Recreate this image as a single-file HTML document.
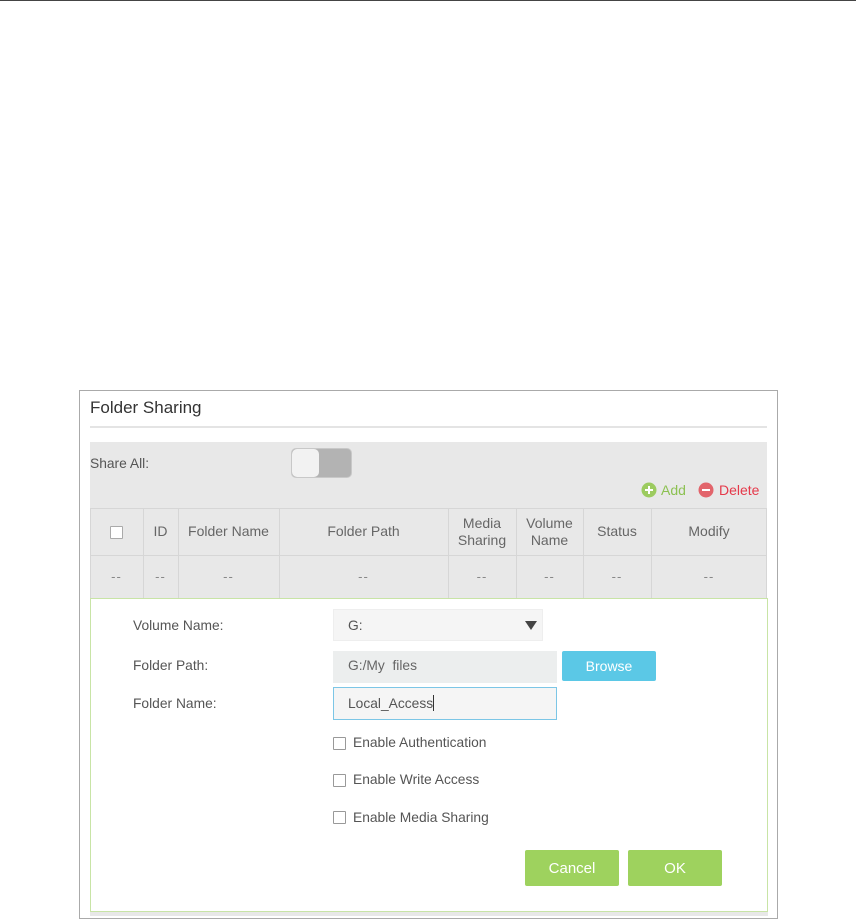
<!DOCTYPE html>
<html><head><meta charset="utf-8"><style>
*{margin:0;padding:0;box-sizing:border-box}
body{width:856px;height:920px;background:#fff;position:relative;overflow:hidden;font-family:"Liberation Sans",sans-serif;color:#555}
.a{position:absolute}
.t{font-size:13.8px;color:#555}
.cb{position:absolute;width:13px;height:13px;border:1px solid #999;background:#fff;border-radius:1px}
.col{position:absolute;top:508px;height:90px;border-left:1px solid #d6d6d6}
.hd{position:absolute;top:508px;height:47px;display:flex;align-items:center;justify-content:center;text-align:center;font-size:14px;color:#666;line-height:17px}
.dd{position:absolute;top:555px;height:43px;display:flex;align-items:center;justify-content:center;font-size:13px;color:#888;letter-spacing:1px}
.btn{position:absolute;background:#9ed25e;color:#fff;font-size:15px;display:flex;align-items:center;justify-content:center;border-radius:2px}
</style></head><body>
<div class="a" style="left:0;top:0;width:856px;height:1px;background:#444"></div>
<div class="a" style="left:79px;top:390px;width:699px;height:529px;border:1px solid #aaa"></div>
<div class="a" style="left:90px;top:398px;font-size:17px;color:#333">Folder Sharing</div>
<div class="a" style="left:90px;top:426px;width:677px;height:2px;background:#e4e4e4"></div>
<div class="a" style="left:90px;top:442px;width:677px;height:156px;background:#e8e8e8"></div>
<div class="a t" style="left:90px;top:456px">Share All:</div>
<div class="a" style="left:291px;top:448px;width:61px;height:30px;background:#b3b3b3;border-radius:5px;border:1px solid #c8c8c8"></div>
<div class="a" style="left:292px;top:449px;width:27px;height:28px;background:#f2f2f2;border-radius:5px"></div>
<svg class="a" style="left:641px;top:482px" width="16" height="16"><circle cx="8" cy="8" r="7.5" fill="#9ccb5f"/><path d="M4 8h8M8 4v8" stroke="#fff" stroke-width="2"/></svg>
<div class="a" style="left:661px;top:482px;font-size:14px;color:#8cc152">Add</div>
<svg class="a" style="left:698px;top:482px" width="16" height="16"><circle cx="8" cy="8" r="7.5" fill="#e2646b"/><path d="M4 8h8" stroke="#fff" stroke-width="2"/></svg>
<div class="a" style="left:719px;top:482px;font-size:14px;color:#e5394a">Delete</div>
<div class="a" style="left:90px;top:508px;width:677px;height:90px;border-top:1px solid #d6d6d6;border-right:1px solid #d6d6d6;border-left:1px solid #d6d6d6"></div>
<div class="a" style="left:90px;top:555px;width:677px;height:1px;background:#d6d6d6"></div>
<div class="col" style="left:143px"></div><div class="col" style="left:178px"></div><div class="col" style="left:279px"></div><div class="col" style="left:448px"></div><div class="col" style="left:516px"></div><div class="col" style="left:583px"></div><div class="col" style="left:651px"></div>
<div class="cb" style="left:110px;top:526px;border-color:#aaa"></div>
<div class="hd" style="left:143px;width:35px">ID</div>
<div class="hd" style="left:178px;width:101px">Folder Name</div>
<div class="hd" style="left:279px;width:169px">Folder Path</div>
<div class="hd" style="left:448px;width:68px">Media<br>Sharing</div>
<div class="hd" style="left:516px;width:67px">Volume<br>Name</div>
<div class="hd" style="left:583px;width:68px">Status</div>
<div class="hd" style="left:651px;width:116px">Modify</div>
<div class="dd" style="left:90px;width:53px">--</div>
<div class="dd" style="left:143px;width:35px">--</div>
<div class="dd" style="left:178px;width:101px">--</div>
<div class="dd" style="left:279px;width:169px">--</div>
<div class="dd" style="left:448px;width:68px">--</div>
<div class="dd" style="left:516px;width:67px">--</div>
<div class="dd" style="left:583px;width:68px">--</div>
<div class="dd" style="left:651px;width:116px">--</div>
<div class="a" style="left:90px;top:598px;width:678px;height:314px;border:1px solid #c8e4a6;background:#fff"></div>
<div class="a" style="left:90px;top:912px;width:678px;height:4px;background:#e8e8e8"></div>
<div class="a t" style="left:133px;top:618px">Volume Name:</div>
<div class="a t" style="left:133px;top:658px">Folder Path:</div>
<div class="a t" style="left:133px;top:696px">Folder Name:</div>
<div class="a" style="left:333px;top:609px;width:210px;height:32px;background:#f5f5f5;border:1px solid #eee"></div>
<div class="a t" style="left:348px;top:618px">G:</div>
<svg class="a" style="left:525px;top:621px" width="12" height="9"><path d="M0 0h12L6 9z" fill="#444"/></svg>
<div class="a" style="left:333px;top:651px;width:224px;height:32px;background:#eceeee"></div>
<div class="a t" style="left:348px;top:658px;color:#666">G:/My&nbsp; files</div>
<div class="a" style="left:562px;top:651px;width:94px;height:30px;background:#5bc8e6;color:#fff;font-size:14px;display:flex;align-items:center;justify-content:center;border-radius:2px">Browse</div>
<div class="a" style="left:333px;top:687px;width:224px;height:33px;background:#f5f5f5;border:1px solid #7cc6e6"></div>
<div class="a t" style="left:348px;top:695px">Local_Access<span style="display:inline-block;width:1px;height:16px;background:#333;vertical-align:-3px"></span></div>
<div class="cb" style="left:333px;top:737px"></div><div class="a t" style="left:353px;top:735px">Enable Authentication</div>
<div class="cb" style="left:333px;top:774px"></div><div class="a t" style="left:353px;top:772px">Enable Write Access</div>
<div class="cb" style="left:333px;top:811px"></div><div class="a t" style="left:353px;top:810px">Enable Media Sharing</div>
<div class="btn" style="left:525px;top:850px;width:94px;height:36px">Cancel</div>
<div class="btn" style="left:628px;top:850px;width:94px;height:36px">OK</div>
</body></html>
